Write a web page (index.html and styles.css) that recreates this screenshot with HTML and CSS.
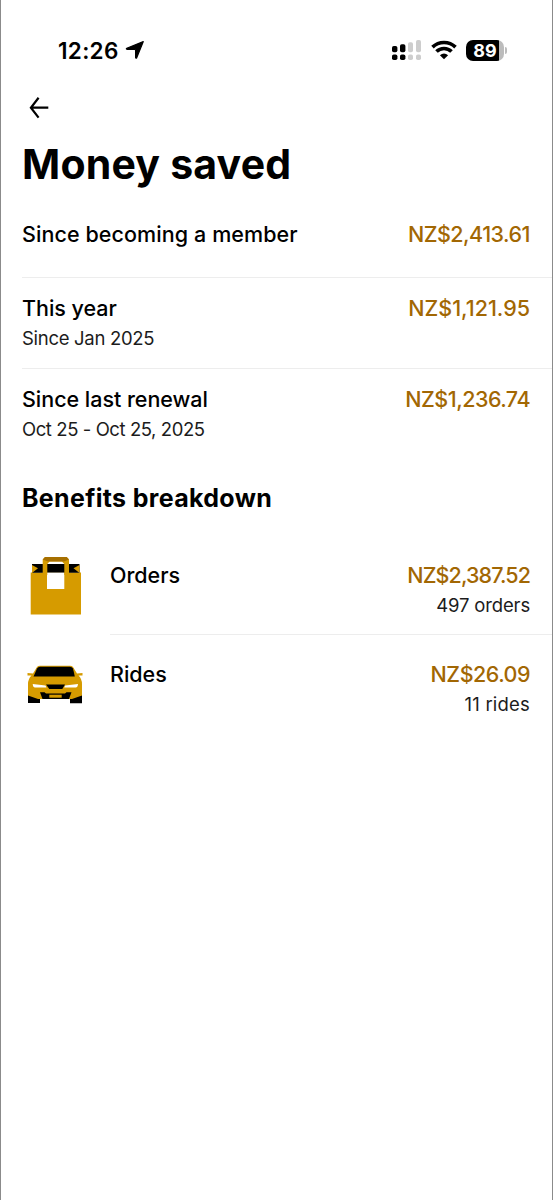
FILE: index.html
```html
<!DOCTYPE html>
<html lang="en">
<head>
<meta charset="utf-8">
<title>Money saved</title>
<link rel="stylesheet" href="styles.css">
</head>
<body>
<div class="screen">
  <header class="status">
    <div class="clock"><span class="time">12:26</span>
      <svg class="arrow" width="20" height="20" viewBox="0 0 20 20"><path stroke="#000" stroke-width="1.200" stroke-linejoin="round" d="M18.300 1.600 11.700 17.800Q11 18.800 10.600 17.500V10.300Q10.600 9.300 9.600 9.300H2Q.800 8.800 1.800 8.200Z"/></svg>
    </div>
    <div class="indicators">
      <svg class="signal" width="30" height="21" viewBox="0 0 30 21"><g fill="#000"><rect x="0" y="6" width="5.400" height="6.200" rx="1.800"/><rect x="8" y="4.300" width="5.400" height="8" rx="1.800"/><rect x="0" y="14.500" width="5.400" height="5.500" rx="1.800"/><rect x="8" y="14.500" width="5.400" height="5.500" rx="1.800"/></g><g fill="#cdcdcd"><rect x="16" y="2.300" width="5" height="10" rx="1.800"/><rect x="24" y="0" width="5" height="12.300" rx="1.800"/><rect x="16" y="14.500" width="5" height="5.500" rx="1.800"/><rect x="24" y="14.500" width="5" height="5.500" rx="1.800"/></g></svg>
      <svg class="wifi" width="26" height="20" viewBox="0 0 26 20"><g fill="none" stroke="#000" stroke-width="3.600"><path d="M1.500 7.100A16.500 16.500 0 0 1 24.500 7.100"/><path d="M5.500 11.600A10.500 10.500 0 0 1 20.500 11.600"/></g><path d="M13 19.300 8.900 15.200Q13 12 17.100 15.200Z"/></svg>
      <div class="battery"><span class="level">89</span></div><i class="cap"></i>
    </div>
  </header>
  <nav class="nav"><svg width="20" height="22" viewBox="0 0 20 22" fill="none" stroke="#000" stroke-width="2.200"><path d="M19.300 10.700H1.800M9.600 .800 1.900 10.700 9.600 20.600"/></svg></nav>
  <h1 class="title">Money saved</h1>
  <section class="totals">
    <div class="row first"><div class="label">Since becoming a member</div><div class="amount">NZ$2,413.61</div></div>
    <div class="row"><div><div class="label snug">This year</div><div class="sub">Since Jan 2025</div></div><div class="amount wide">NZ$1,121.95</div></div>
    <div class="row"><div><div class="label snug">Since last renewal</div><div class="sub range">Oct 25 - Oct 25, 2025</div></div><div class="amount">NZ$1,236.74</div></div>
  </section>
  <h2 class="heading">Benefits breakdown</h2>
  <section class="benefits">
    <div class="benefit">
      <svg class="icon bag" width="66" height="66" viewBox="0 0 66 66"><path fill="#d69b00" d="M8.700 21.500H59V63.500H8.700Z"/><path d="M10 13H57.500V21.700H10Z"/><path fill="#d69b00" d="M10 14 16 17.300 10 22ZM57.500 14 51.500 17.300 57.500 22Z"/><path fill="#fff" d="M25 21.700H42.300V38H25Z"/><path fill="#d69b00" d="M20.700 8.500 23 6H44.700L47 8.500V24H42.300V13L40 10.500H27.500L25.300 13V24H20.700Z"/><path fill="#a66f00" d="M23 6H44.700L47 8.500 42 10.500H26L20.700 8.500Z"/></svg>
      <div class="detail"><div class="label snug">Orders</div><div class="value"><div class="amount tight">NZ$2,387.52</div><div class="sub count">497 orders</div></div></div>
    </div>
    <div class="benefit">
      <svg class="icon car" width="66" height="66" viewBox="0 0 66 66"><path d="M6 42H18V53H6ZM48 42H60V53.300H48Z"/><path fill="#d69b00" d="M15 17Q16 15.700 18 15.700H48Q50 15.700 51 17L55 23.500 60.500 23V25.500H56.500Q60 29 60 34V45.500L50 49H16L6 45.500V34Q6 29 9.500 25.500H5.500V23L11 23.500Z"/><path d="M18 16.700H48Q50 16.700 51 18.500L52.800 26.500H11.500L15 18.500Q16 16.700 18 16.700Z"/><path d="M24 34.500H43L40.300 39H27.300ZM18 42.300H22.500L24 43.500H43L44.500 42.300H49.500L47 49H20.500Z"/><path fill="#d69b00" d="M27.300 44.700H39.700V47.700H27.300Z"/><path fill="#fff" d="M10.700 34 23.500 35.500 24.500 37.500H13Q11 37.500 10.700 34ZM56 34 43.200 35.500 42.200 37.500H53.700Q55.700 37.500 56 34Z"/></svg>
      <div class="detail"><div class="label snug">Rides</div><div class="value"><div class="amount">NZ$26.09</div><div class="sub rides">11 rides</div></div></div>
    </div>
  </section>
</div>
</body>
</html>
```
FILE: styles.css
```css
* { box-sizing: border-box; }
body { margin: 0; background: #fff; color: #000; font-family: Inter, "Liberation Sans", sans-serif; }
svg { display: block; flex: none; }
.screen { height: 1200px; padding-left: 21px; border-left: 1px solid #8b8b8b; border-right: 1px solid #8b8b8b; overflow: hidden; }
.status { height: 96px; padding: 37px 45px 0 36px; display: flex; justify-content: space-between; }
.clock { display: flex; height: 26px; align-items: center; gap: 6px; }
.time { font-size: 22.5px; font-weight: 600; letter-spacing: .3px; }
.indicators { display: flex; height: 26px; align-items: center; }
.signal { margin-right: 9px; }
.wifi { margin-right: 9px; }
.battery { width: 38px; height: 21px; border-radius: 7px; background: linear-gradient(90deg, #000 33px, #bcbcbc 33px); color: #fff; }
.level { display: block; font-size: 18px; font-weight: 700; line-height: 21px; text-align: center; }
.cap { width: 2px; height: 7px; margin-left: 1px; border-radius: 0 3px 3px 0; background: #bcbcbc; }
.nav { height: 44px; padding: 1px 0 0 7px; }
.title { margin: 0; height: 65px; font-size: 41px; line-height: 49px; font-weight: 700; letter-spacing: .2px; }
.row { display: flex; justify-content: space-between; height: 91px; padding: 15px 22px 0 0; border-bottom: 1px solid #ededed; }
.row.first { height: 73px; padding-top: 14px; }
.row:last-child { border: 0; }
.label, .amount { font-size: 21.5px; line-height: 30px; font-weight: 500; letter-spacing: .08px; white-space: nowrap; }
.label.snug { letter-spacing: -.03px; }
.amount { color: #a26703; letter-spacing: -.5px; }
.amount.wide { letter-spacing: 0; }
.amount.tight { letter-spacing: -.9px; }
.sub { font-size: 18.5px; line-height: 30px; color: #1c1c1c; letter-spacing: -.3px; white-space: nowrap; }
.sub.range { letter-spacing: -.42px; }
.sub.count { letter-spacing: -.15px; }
.sub.rides { letter-spacing: .2px; }
.heading { margin: 21px 0 0; font-size: 25px; line-height: 34px; font-weight: 700; letter-spacing: .33px; }
.benefits { padding-top: 30px; }
.benefit { display: flex; gap: 22px; height: 99px; }
.icon { margin-top: 6px; }
.detail { flex: 1; display: flex; justify-content: space-between; height: 90px; padding: 15px 22px 0 0; border-bottom: 1px solid #ededed; }
.value { text-align: right; }
.benefit:last-child .detail { border: 0; }
```
